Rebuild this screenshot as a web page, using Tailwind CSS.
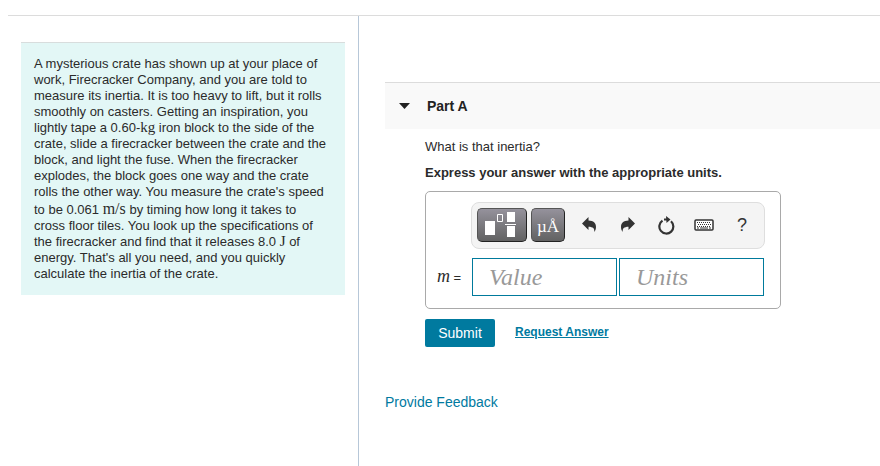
<!DOCTYPE html>
<html lang="en">
  <head>
    <meta charset="UTF-8" />
    <meta name="viewport" content="width=device-width, initial-scale=1.0" />
    <title>Part A</title>
    <script src="https://cdn.jsdelivr.net/npm/@tailwindcss/browser@4"></script>
  </head>
  <body class="bg-white font-['Liberation_Sans',Arial,sans-serif] text-[13px] leading-4 text-[#2b2b2b]">
    <div class="flex min-h-screen flex-col pt-[15px] pl-2">
      <main class="flex flex-1 border-t border-[#dcdcdc]">
        <!-- Problem statement -->
        <aside class="w-[351px] shrink-0 border-r border-[#b7c7d8] pt-[26px] pr-[13px] pl-[13px]">
          <p class="border-t border-[#d8dddd] bg-[#e3f7f6] py-[13px] pr-4 pl-[13px]">
            A mysterious crate has shown up at your place of work, Firecracker
            Company, and you are told to measure its inertia. It is too heavy to
            lift, but it rolls smoothly on casters. Getting an inspiration, you
            lightly tape a 0.60-<span class="font-['Liberation_Serif',serif] text-[15px] leading-3">kg</span>
            iron block to the side of the crate, slide a firecracker between the
            crate and the block, and light the fuse. When the firecracker
            explodes, the block goes one way and the crate rolls the other way.
            You measure the crate's speed to be 0.061
            <span class="font-['Liberation_Serif',serif] text-[16px] leading-[18px]">m/s</span>
            by timing how long it takes to cross floor tiles. You look up the
            specifications of the firecracker and find that it releases 8.0
            <span class="font-['Liberation_Serif',serif] text-[15px] leading-3">J</span> of
            energy. That's all you need, and you quickly calculate the inertia
            of the crate.
          </p>
        </aside>

        <section class="min-w-0 flex-1 pt-[66px] pl-[26px]">
          <header class="flex h-[47px] items-center border-t border-[#dcdcdc] bg-[#f9f9f9] pl-[14px]">
            <svg class="h-[6px] w-[11px]" viewBox="0 0 11 6" fill="#222"><path d="M0 0h11L5.500 6z" /></svg>
            <h2 class="pl-[17px] text-sm font-bold text-[#222]">Part A</h2>
          </header>

          <div class="pt-[10px] pl-10">
            <p>What is that inertia?</p>
            <p class="pt-[10px] font-bold">Express your answer with the appropriate units.</p>

            <form class="mt-[10px]">
              <div class="w-[356px] rounded-[5px] border border-[#a9a9a9] pt-[10px] pr-4 pb-3 pl-[10px]">
                <!-- Equation toolbar -->
                <div class="ml-[35px] flex h-[47px] w-[294px] items-center rounded-lg border border-[#dedede] bg-[#f4f4f4] pb-px pl-[5px]">
                  <button type="button" aria-label="Templates" class="flex h-[34px] w-[50px] items-center justify-center rounded-[5px] border border-t-[#555] border-r-[#222] border-b-[#222] border-l-[#555] bg-linear-to-b from-[#95929c] to-[#626262]">
                    <svg class="h-[26px] w-[34px]" viewBox="0 0 34 26" fill="#fff">
                      <path d="M0 9h10v14H0zM22 0h8v10h-8zM20 12h11v1H20zM22 14h8v11h-8z" />
                      <path d="M12.500 2.500h5v7h-5z" fill="none" stroke="#fff" />
                    </svg>
                  </button>
                  <button type="button" aria-label="Units" class="ml-1 h-[34px] w-[34px] rounded-[5px] border border-t-[#555] border-r-[#222] border-b-[#222] border-l-[#555] bg-linear-to-b from-[#95929c] to-[#626262] pt-1 font-['Liberation_Serif',serif] text-[17px] text-white">µÅ</button>
                  <button type="button" aria-label="Undo" class="ml-[17px]">
                    <svg class="h-4 w-[15px]" viewBox="0 0 15 16" fill="#333"><path d="M0 6.500 6.500 0v3.500C11.500 3.700 14 6 14 10c0 2-.8 4-1.800 5 .6-3.500-1.200-5.200-5.700-5.300V13z" /></svg>
                  </button>
                  <button type="button" aria-label="Redo" class="ml-6">
                    <svg class="h-4 w-[15px]" viewBox="0 0 15 16" fill="#333"><path d="M14 6.500 7.500 0v3.500C2.500 3.700 0 6 0 10c0 2 .8 4 1.800 5-.6-3.500 1.200-5.200 5.700-5.300V13z" /></svg>
                  </button>
                  <button type="button" aria-label="Reset" class="ml-[22px]">
                    <svg class="h-[19px] w-[17px]" viewBox="0 0 17 19"><path d="M4.500 4.700A7 7 0 1 0 13 5.300M6 3.500H9.500" fill="none" stroke="#333" stroke-width="2.200" /><path d="M8 0 12.500 3.500 8.500 7z" fill="#333" /></svg>
                  </button>
                  <button type="button" aria-label="Keyboard" class="ml-[19px]">
                    <svg class="h-3 w-5" viewBox="0 0 20 12"><rect x="1" y="1" width="18" height="10" rx="1" fill="#fff" stroke="#333" stroke-width="1.500" /><path d="M3 3.500h14M4 5.500h13M3 7.500h14" stroke="#333" stroke-dasharray="1 1" /><path d="M3 9h2M6 9h8M15 9h2" stroke="#333" /></svg>
                  </button>
                  <button type="button" aria-label="Help" class="ml-[23px] text-lg text-[#333]">?</button>
                </div>
                <div class="mt-[9px] flex items-center">
                  <label for="value" class="w-9 shrink-0 pl-px whitespace-nowrap"><i class="font-['Liberation_Serif',serif] text-[18px]">m</i> =</label>
                  <input id="value" type="text" placeholder="Value" class="h-[38px] w-[145px] border border-[#007a9c] px-4 font-['Liberation_Serif',serif] text-2xl italic placeholder:text-[#999]" />
                  <input type="text" aria-label="Units" placeholder="Units" class="ml-[2px] h-[38px] w-[145px] border border-[#007a9c] px-4 font-['Liberation_Serif',serif] text-2xl italic placeholder:text-[#999]" />
                </div>
              </div>

              <div class="mt-[10px] flex items-center">
                <button type="submit" class="h-7 w-[70px] rounded-[2px] bg-[#007a9f] text-sm text-white">Submit</button>
                <a href="#" class="ml-5 pb-0.5 text-xs font-bold text-[#007a9f] underline">Request Answer</a>
              </div>
            </form>
          </div>

          <a href="#" class="mt-[45px] inline-block text-sm text-[#007a9f]">Provide Feedback</a>
        </section>
      </main>
    </div>
  </body>
</html>
